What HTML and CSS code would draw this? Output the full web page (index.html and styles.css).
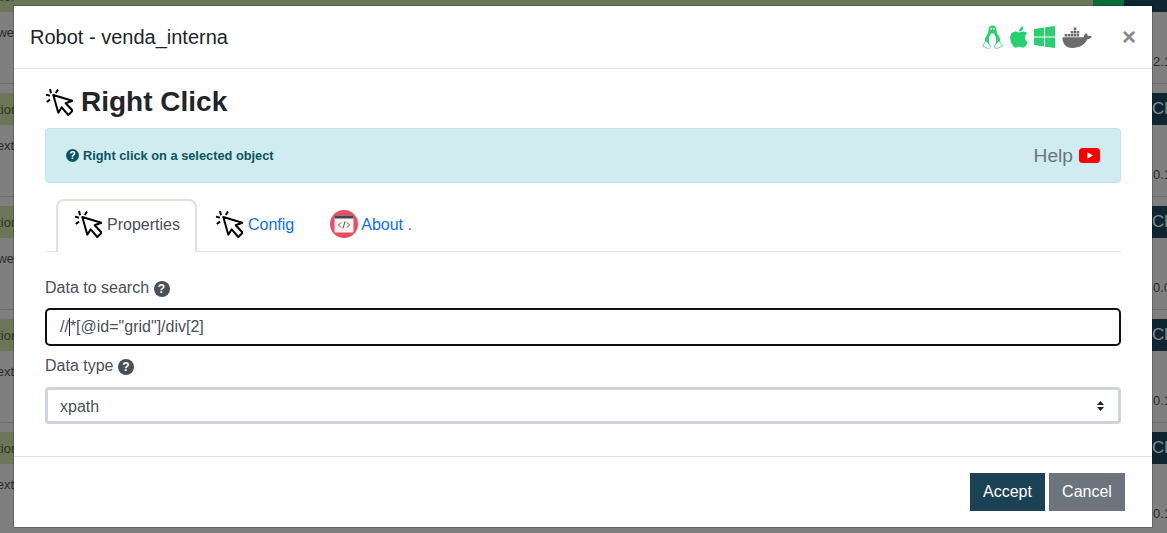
FILE: index.html
```html
<!DOCTYPE html>
<html lang="en">
<head>
    <meta charset="UTF-8">
    <meta name="viewport" content="width=device-width, initial-scale=1.0">
    <title>Robot - venda_interna</title>
    <link rel="stylesheet" href="styles.css">
</head>
<body>
    <svg class="defs" width="0" height="0">
        <symbol id="click" viewBox="0 0 28 28">
            <path d="M8.300 7 13.300 24.700 16.700 19.300 23.300 27 27.700 22.700 20.700 15.300 27.300 12.700Z" fill="#fff" stroke="#000" stroke-width="2" stroke-linejoin="round"/>
            <path d="M5 1 6 5.200M13 1.500 10.800 5M1 6.600 5 7.800M1.800 14 5 11.600" fill="none" stroke="#000" stroke-width="2"/>
        </symbol>
    </svg>

    <!-- page behind the dialog -->
    <div class="backdrop">
        <div class="row">
            <div class="band">
                <span class="band-label">Action</span>
                <span class="band-gap"></span>
                <span class="band-ok"></span>
                <span class="band-btn"></span>
            </div>
            <div class="row-body"><span class="row-left">we</span><span class="row-right">2.10</span></div>
        </div>
        <div class="row">
            <div class="band"><span class="band-label">Action</span><span class="band-gap"></span><span class="band-btn">Close</span></div>
            <div class="row-body"><span class="row-left">Text</span><span class="row-right">0.11</span></div>
        </div>
        <div class="row">
            <div class="band"><span class="band-label">Action</span><span class="band-gap"></span><span class="band-btn">Close</span></div>
            <div class="row-body"><span class="row-left">we</span><span class="row-right">0.06</span></div>
        </div>
        <div class="row">
            <div class="band"><span class="band-label">Action</span><span class="band-gap"></span><span class="band-btn">Close</span></div>
            <div class="row-body"><span class="row-left">Text</span><span class="row-right">0.11</span></div>
        </div>
        <div class="row">
            <div class="band"><span class="band-label">Action</span><span class="band-gap"></span><span class="band-btn">Close</span></div>
            <div class="row-body"><span class="row-left">Text</span><span class="row-right">0.11</span></div>
        </div>
    </div>

    <div class="modal">
        <div class="modal-header">
            <h5>Robot - venda_interna</h5>
            <div class="os-icons">
                <svg class="tux" viewBox="0 0 21 24">
                    <path d="M10.500.500C7.600.500 6.500 2.400 6.500 5c0 2.300-.6 3.600-1.900 5.400C3.300 12.200 2.600 14.200 3 16.500L6 20H15L18 16.500C18.400 14.200 17.700 12.200 16.400 10.400 15.100 8.600 14.500 7.300 14.500 5 14.500 2.400 13.400 .500 10.500.500Z" fill="#27d16f"/>
                    <path d="M9.300 8.200C8 10.200 6.800 12.400 6.800 15.400 6.800 18.500 8.300 20.500 10.500 20.500S14.200 18.500 14.200 15.400C14.200 12.400 13 10.200 11.700 8.200 11 8.600 10 8.600 9.300 8.200Z" fill="#fff"/>
                    <circle cx="9.200" cy="3.700" r=".9" fill="#fff"/>
                    <circle cx="11.800" cy="3.700" r=".9" fill="#fff"/>
                    <path d="M3.600 16.200C2.600 17.500 1.400 19.800.6 21.200 1.700 22 3.500 22 4.800 22.900 6.300 23.800 8 23.300 8.600 22 8 19.800 5.800 17.400 3.600 16.200ZM17.400 16.200C18.400 17.500 19.600 19.800 20.400 21.200 19.300 22 17.500 22 16.200 22.900 14.700 23.800 13 23.300 12.400 22 13 19.800 15.200 17.400 17.400 16.200Z" fill="#fff" stroke="#5fe094" stroke-width="1"/>
                </svg>
                <svg class="apple" viewBox="0 0 384 512">
                    <path fill="#27d16f" d="M318.700 268.700c-.2-36.700 16.400-64.400 50-84.800-18.800-26.900-47.200-41.700-84.700-44.600-35.500-2.800-74.300 20.700-88.500 20.700-15 0-49.400-19.700-76.400-19.700C63.300 141.200 4 184.800 4 273.500q0 39.300 14.400 81.200c12.800 36.700 59 126.700 107.200 125.200 25.200-.6 43-17.900 75.800-17.900 31.800 0 48.300 17.900 76.400 17.900 48.600-.7 90.400-82.500 102.600-119.300-65.200-30.700-61.700-90-61.700-91.900zm-56.600-164.200c27.300-32.400 24.800-61.900 24-72.500-24.100 1.400-52 16.400-67.900 34.900-17.500 19.800-27.800 44.300-25.600 71.900 26.100 2 49.900-11.400 69.500-34.300z"/>
                </svg>
                <svg class="windows" viewBox="0 0 21 22">
                    <path fill="#27d16f" d="M0 3 9.900 1.500V10.400H0ZM11.100 1.300 21 0V10.400H11.100ZM0 11.600H9.900V20.500L0 19ZM11.100 11.600H21V22L11.100 20.700Z"/>
                </svg>
                <svg class="docker" viewBox="0 0 30 22">
                    <path fill="#6c6c6c" d="M.5 11.300H21.800C22 9.500 22.600 8 24 7.200 25 8 25.700 8.900 25.900 10 27 9.600 28.500 9.700 29.800 10.500 29 12.300 27.300 13.300 25.300 13.300 23 18.800 17 22 10.500 22 3.500 22 .3 17.500.5 11.300Z"/>
                    <path fill="#6c6c6c" d="M2.700 8H5.200V10.400H2.700ZM5.700 8H8.200V10.400H5.700ZM8.700 8H11.200V10.400H8.700ZM11.700 8H14.200V10.400H11.700ZM14.700 8H17.200V10.400H14.700ZM8.700 5H11.200V7.400H8.700ZM11.700 5H14.200V7.400H11.700ZM14.700 5H17.200V7.400H14.700ZM11.700 1.500H14.200V4.400H11.700Z"/>
                </svg>
            </div>
            <button class="close">&times;</button>
        </div>

        <div class="modal-body">
            <div class="title-row">
                <svg class="click-icon"><use href="#click"/></svg>
                <h2>Right Click</h2>
            </div>

            <div class="alert">
                <span class="alert-text"><span class="hint hint-small hint-info">?</span> Right click on a selected object</span>
                <span class="help">Help
                    <svg class="youtube" viewBox="0 0 21 15">
                        <rect width="21" height="15" rx="3.500" fill="#f00"/>
                        <path d="M8.300 4.300 14 7.500 8.300 10.700Z" fill="#fff"/>
                    </svg>
                </span>
            </div>

            <div class="tabs">
                <a class="tab active"><svg class="click-icon"><use href="#click"/></svg>Properties</a>
                <a class="tab"><svg class="click-icon"><use href="#click"/></svg>Config</a>
                <a class="tab">
                    <svg class="click-icon" viewBox="0 0 28 28">
                        <circle cx="14" cy="14" r="14" fill="#ef4b68"/>
                        <rect x="4.500" y="5.500" width="19" height="17" rx="1" fill="#f4f1ee"/>
                        <rect x="4.500" y="5.500" width="19" height="3" fill="#44474c"/>
                        <path d="M11 12.500 8.500 15 11 17.500M17 12.500 19.500 15 17 17.500M15 11.500 13 18.500" fill="none" stroke="#55585e" stroke-width="1"/>
                    </svg>About .
                </a>
            </div>

            <label class="field-label">Data to search <span class="hint">?</span></label>
            <div class="input-box">//<span class="caret"></span>*[@id="grid"]/div[2]</div>

            <label class="field-label type-label">Data type <span class="hint">?</span></label>
            <select class="select-box">
                <option>xpath</option>
            </select>
        </div>

        <div class="modal-footer">
            <button class="btn btn-accept">Accept</button>
            <button class="btn btn-cancel">Cancel</button>
        </div>
    </div>
</body>
</html>
```

FILE: styles.css
```css
* {
    box-sizing: border-box;
}

html, body {
    height: 100%;
}

body {
    margin: 0;
    overflow: hidden;
    position: relative;
    font-family: "Liberation Sans", Arial, sans-serif;
    font-size: 16px;
    color: #212529;
    background-color: #7f7f7f;
}

.defs {
    position: absolute;
}

/* page behind the dialog */
.backdrop {
    margin-top: -30px;
    font-size: 13px;
    color: #2b2b2b;
}

.row {
    height: 113px;
    padding-top: 9px;
    border-top: 1px solid #6c6c6c;
}

.band {
    display: flex;
    align-items: center;
    height: 32px;
    background-color: #6b7659;
}

.band-label {
    width: 14px;
    overflow: hidden;
    white-space: nowrap;
    text-indent: -18px;
    color: #30351f;
}

.band-gap {
    flex: 1;
}

.band-ok {
    width: 31px;
    height: 100%;
    background-color: #0c6b3a;
}

.band-btn {
    width: 43px;
    height: 100%;
    padding-left: 28px;
    line-height: 32px;
    overflow: hidden;
    font-size: 17px;
    color: #7f8c93;
    background-color: #0f2531;
}

.row-body {
    display: flex;
    justify-content: space-between;
    padding-top: 14px;
}

.row-left {
    width: 14px;
    display: flex;
    justify-content: flex-end;
    overflow: hidden;
    line-height: 13px;
}

.row-right {
    width: 15px;
    padding-left: 1px;
    overflow: hidden;
    margin-top: 29px;
    line-height: 13px;
}

/* dialog */
.modal {
    position: absolute;
    left: 14px;
    top: 6px;
    width: 1138px;
    height: 521px;
    display: flex;
    flex-direction: column;
    background-color: #fff;
    box-shadow: 0 0 0 1px rgba(0, 0, 0, 0.2);
}

.modal-header {
    display: flex;
    align-items: center;
    height: 63px;
    padding: 0 16px;
    border-bottom: 1px solid #dee2e6;
}

.modal-header h5 {
    flex: 1;
    margin: 0;
    font-size: 20px;
    font-weight: 400;
}

.os-icons {
    display: flex;
    align-items: center;
    margin-right: 30px;
}

.tux {
    width: 21px;
    height: 24px;
    margin-right: 7px;
}

.apple {
    width: 18px;
    height: 24px;
    margin-right: 6px;
}

.windows {
    width: 21px;
    height: 22px;
    margin-right: 7px;
}

.docker {
    width: 30px;
    height: 22px;
}

.close {
    border: none;
    padding: 0;
    background: none;
    font-family: inherit;
    font-size: 24px;
    font-weight: bold;
    line-height: 1;
    color: #888;
    cursor: pointer;
}

.modal-body {
    flex: 1;
    padding: 18px 31px 0;
}

.title-row {
    display: flex;
    align-items: center;
    gap: 8px;
    margin-bottom: 11px;
}

.title-row h2 {
    margin: 0;
    font-size: 28px;
    line-height: 30px;
    font-weight: bold;
}

.click-icon {
    width: 28px;
    height: 28px;
    flex-shrink: 0;
}

.alert {
    display: flex;
    align-items: center;
    justify-content: space-between;
    height: 55px;
    padding: 0 20px;
    border: 1px solid #bee5eb;
    border-radius: 4px;
    background-color: #d1ecf1;
}

.alert-text {
    display: flex;
    align-items: center;
    gap: 4px;
    font-size: 12.800px;
    font-weight: bold;
    color: #0c5460;
}

.help {
    display: flex;
    align-items: center;
    gap: 6px;
    font-size: 19.200px;
    color: #6c757d;
}

.youtube {
    width: 21px;
    height: 15px;
}

.hint {
    display: inline-flex;
    align-items: center;
    justify-content: center;
    width: 16px;
    height: 16px;
    border-radius: 50%;
    font-size: 12px;
    font-weight: bold;
    color: #fff;
    background-color: #495057;
}

.hint-small {
    width: 13px;
    height: 13px;
    font-size: 10px;
}

.hint-info {
    background-color: #0c5460;
}

.tabs {
    display: flex;
    height: 53px;
    margin-top: 16px;
    padding-left: 11px;
    border-bottom: 1px solid #dee2e6;
}

.tab {
    display: flex;
    align-items: flex-start;
    gap: 5px;
    height: 53px;
    padding: 9px 18px 0;
    color: #0d6efd;
    line-height: 34px;
}

.tab .click-icon {
    margin-top: 2px;
}

.tab:last-child {
    gap: 3px;
}

.tab.active {
    width: 141px;
    padding: 9px 16px 0;
    border: 2px solid #dee2e6;
    border-bottom: none;
    border-radius: 8px 8px 0 0;
    background-color: #fff;
    color: #495057;
    line-height: 30px;
}

.tab.active .click-icon {
    margin-top: 0;
}

.field-label {
    display: block;
    margin-top: 24px;
    line-height: 24px;
    color: #495057;
}

.type-label {
    margin-top: 8px;
}

.input-box {
    display: flex;
    align-items: center;
    height: 38px;
    margin-top: 8px;
    padding: 0 13px;
    border: 2px solid #111;
    border-radius: 5px;
    white-space: pre;
    color: #495057;
}

.caret {
    width: 1px;
    height: 18px;
    background-color: #222;
}

.select-box {
    display: block;
    width: 100%;
    height: 37px;
    margin-top: 9px;
    padding: 1px 12px 0;
    appearance: none;
    border: 3px solid #ced4da;
    border-radius: 4px;
    font-family: inherit;
    font-size: 16px;
    color: #495057;
    background: #fff url("data:image/svg+xml,%3Csvg xmlns='http://www.w3.org/2000/svg' width='9' height='12'%3E%3Cpath d='M4.500 1 8 5H1ZM4.500 11 1 7H8Z' fill='%23222'/%3E%3C/svg%3E") no-repeat right 13px center;
}

.modal-footer {
    display: flex;
    justify-content: flex-end;
    gap: 4px;
    padding: 16px 27px;
    border-top: 1px solid #dee2e6;
}

.btn {
    height: 38px;
    border: none;
    padding: 0 12px;
    font-family: inherit;
    font-size: 16px;
    color: #fff;
    cursor: pointer;
}

.btn-accept {
    width: 75px;
    background-color: #1b4154;
}

.btn-cancel {
    width: 76px;
    background-color: #6c757d;
}
```
